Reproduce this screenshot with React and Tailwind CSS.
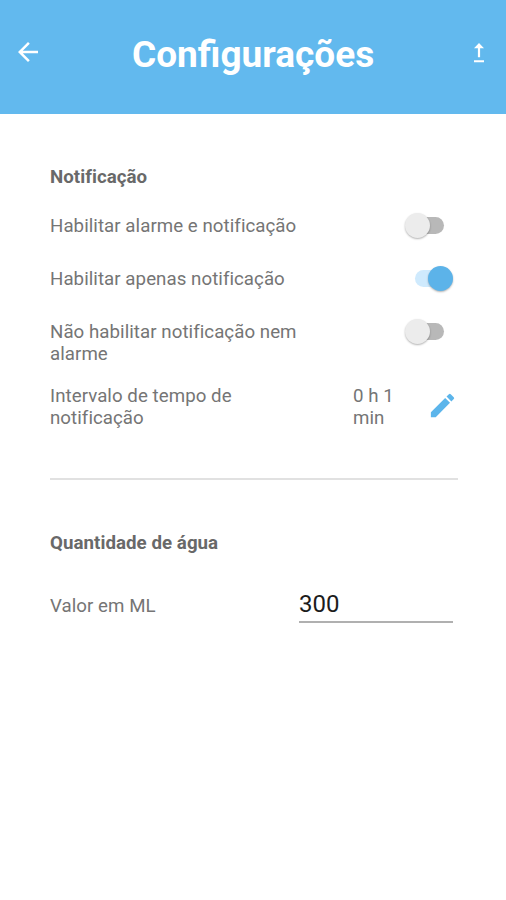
import React from 'react';
import { MdArrowBack, MdEdit } from 'react-icons/md';
import clsx from 'clsx';

const notificationOptions = [
  { id: 'alarm', label: 'Habilitar alarme e notificação', enabled: false, height: 'h-[53px]' },
  { id: 'notification', label: 'Habilitar apenas notificação', enabled: true, height: 'h-[53px]' },
  { id: 'none', label: 'Não habilitar notificação nem alarme', enabled: false, height: 'h-[64px]' },
];

function UploadIcon() {
  return (
    <svg viewBox="0 0 12 20" className="w-3 h-5" fill="currentColor">
      <path d="M6 0 1 5.2h3.9v9h2.2v-9H11zM1 17.2h10v2.1H1z" />
    </svg>
  );
}

function Toggle({ enabled }) {
  return (
    <div
      role="switch"
      aria-checked={enabled}
      className={clsx('flex h-[25px] items-center', enabled ? 'w-[40px] ml-[11px]' : 'w-[39px] ml-px')}
    >
      <div className={clsx('relative h-[17px] rounded-full', enabled ? 'w-[36px] bg-[#cfeafd]' : 'w-[34px] ml-[5px] bg-[#b8b8b8]')}>
        <div
          className={clsx(
            'absolute -top-[4px] size-[25px] rounded-full shadow-[0_1px_2px_rgba(0,0,0,0.3)]',
            enabled ? 'left-[13px] bg-[#5cb3e9]' : '-left-[5px] bg-[#ececec]'
          )}
        />
      </div>
    </div>
  );
}

export default function App() {
  return (
    <div className="w-full h-[900px] overflow-hidden bg-white font-['Roboto',sans-serif] text-[#757575]">
      {/* Header */}
      <header className="flex h-[114px] items-start bg-[#62b9ee] pl-[13px] pr-[21px] text-white">
        <MdArrowBack className="mt-[37px] size-[30px]" />
        <h1 className="mt-[31px] ml-[89px] text-[37px] leading-[48px] font-bold">Configurações</h1>
        <div className="mt-[43px] ml-auto">
          <UploadIcon />
        </div>
      </header>

      <main className="pt-[52px] pl-[50px] pr-[48px] text-[18.7px] leading-[22px] tracking-[0.05px]">
        {/* Notifications */}
        <section>
          <h2 className="font-bold text-[#696969]">Notificação</h2>
          <div className="mt-[27px]">
            {notificationOptions.map((option) => (
              <div key={option.id} className={clsx('flex items-start justify-between', option.height)}>
                <span className="w-[255px]">{option.label}</span>
                <div className="-mt-[2px] w-[54px]">
                  <Toggle enabled={option.enabled} />
                </div>
              </div>
            ))}
            <div className="flex items-start">
              <span className="w-[303px] pr-[90px]">Intervalo de tempo de notificação</span>
              <span className="w-[48px]">0 h 1 min</span>
              <MdEdit className="ml-[26px] mt-[5px] size-[31px] text-[#5cb5eb]" />
            </div>
          </div>
        </section>

        <hr className="mt-[49px] border-t-2 border-[#e1e1e1]" />

        {/* Water amount */}
        <section>
          <h2 className="mt-[52px] font-bold text-[#696969]">Quantidade de água</h2>
          <div className="mt-[38px] flex items-start justify-between pr-[5px]">
            <label htmlFor="amount" className="mt-[3px]">Valor em ML</label>
            <input
              id="amount"
              defaultValue="300"
              className="h-[31px] w-[154px] border-b-2 border-[#b0b0b0] pb-[5px] text-[24px] leading-[24px] text-[#1c1c1c] outline-none"
            />
          </div>
        </section>
      </main>
    </div>
  );
}
